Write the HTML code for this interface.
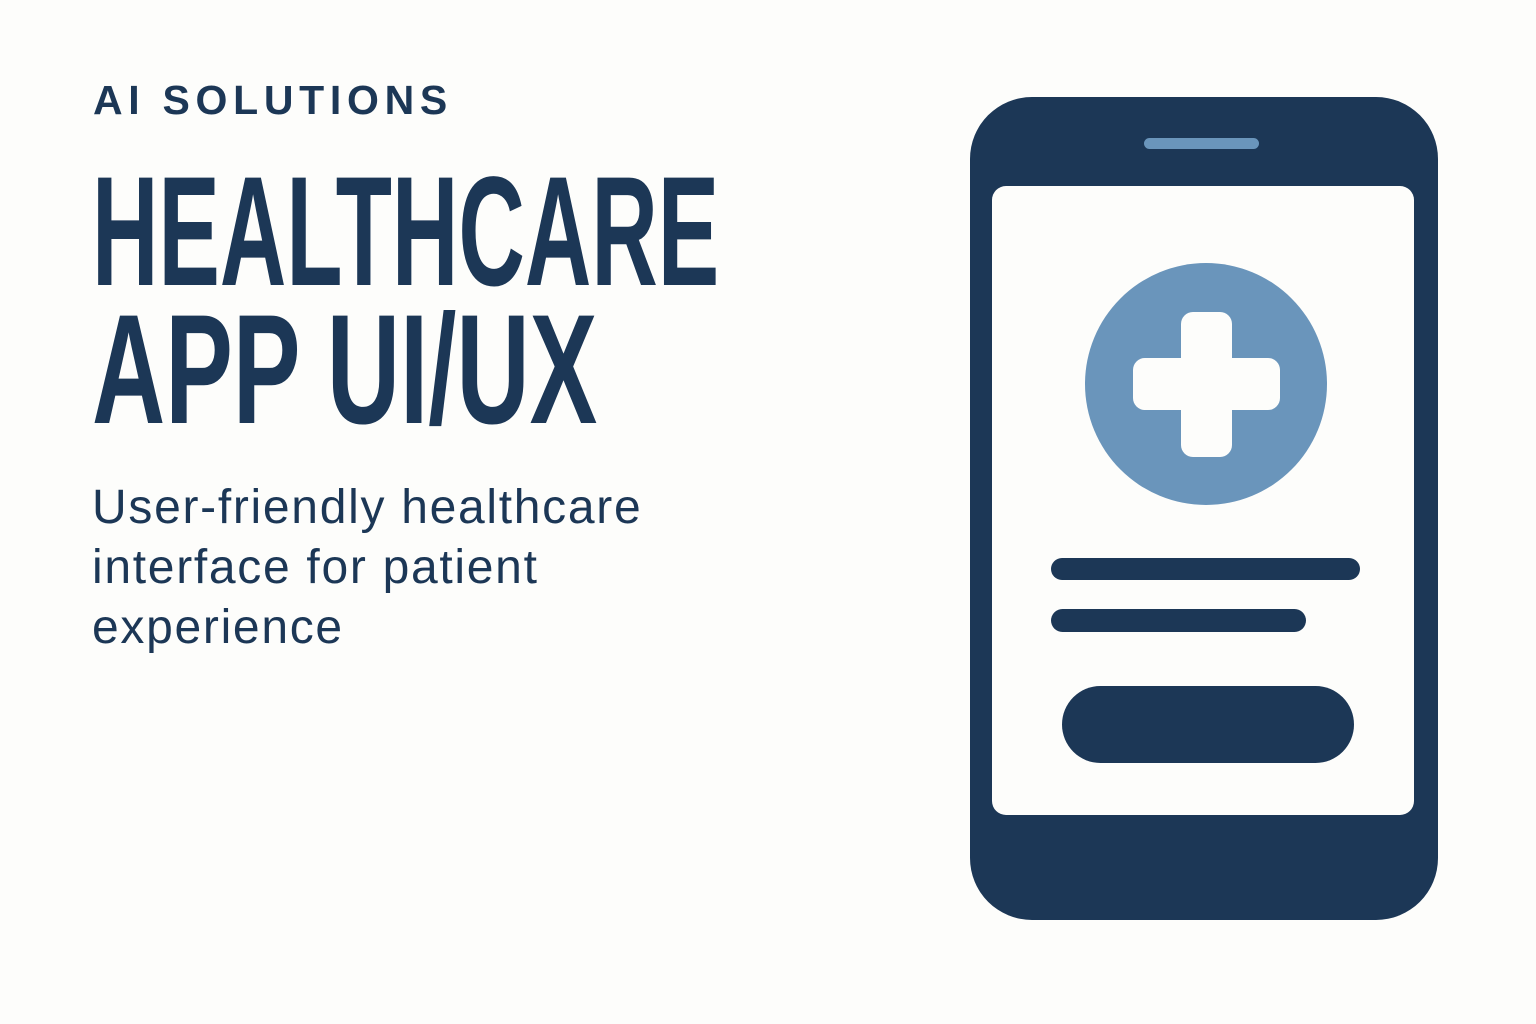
<!DOCTYPE html>
<html><head><meta charset="utf-8"><style>
html,body{margin:0;padding:0;width:1536px;height:1024px;background:#fdfdfb;overflow:hidden}
.t{position:absolute;font-family:"Liberation Sans",sans-serif;color:#1c3756;white-space:nowrap}
.small{left:93px;top:77px;font-size:41px;font-weight:bold;letter-spacing:5.7px}
.big{left:92px;font-size:156px;font-weight:bold;transform-origin:0 0;line-height:156px}
.sub{left:92px;top:478px;font-size:48px;line-height:60px;letter-spacing:1.7px}
</style></head><body>
<div class="t small">AI SOLUTIONS</div>
<div class="t big" style="top:154px;transform:scaleX(0.59)">HEALTHCARE</div>
<div class="t big" style="top:292px;transform:scaleX(0.65)">APP UI/UX</div>
<div class="t sub">User-friendly healthcare<br>interface for patient<br>experience</div>
<svg style="position:absolute;left:0;top:0" width="1536" height="1024">
<rect x="970" y="97" width="468" height="823" rx="62" fill="#1c3756"/>
<rect x="992" y="186" width="422" height="629" rx="14" fill="#fdfdfb"/>
<rect x="1144" y="138" width="115" height="11" rx="5.5" fill="#6a95bb"/>
<circle cx="1206" cy="384" r="121" fill="#6a95bb"/>
<rect x="1181" y="312" width="51" height="145" rx="12" fill="#fdfdfb"/>
<rect x="1133" y="358" width="147" height="52" rx="12" fill="#fdfdfb"/>
<rect x="1051" y="558" width="309" height="22" rx="11" fill="#1c3756"/>
<rect x="1051" y="609" width="255" height="23" rx="11.5" fill="#1c3756"/>
<rect x="1062" y="686" width="292" height="77" rx="38.5" fill="#1c3756"/>
</svg>
</body></html>
